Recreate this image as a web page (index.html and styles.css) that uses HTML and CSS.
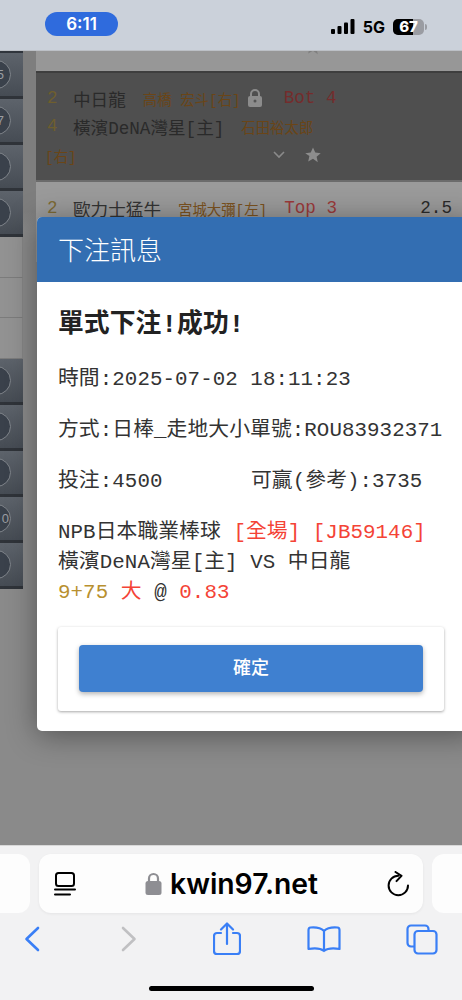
FILE: index.html
```html
<!DOCTYPE html>
<html lang="en">
<head>
  <meta charset="UTF-8">
  <meta name="viewport" content="width=device-width, initial-scale=1.0">
  <title>下注訊息</title>
  <link rel="stylesheet" href="styles.css">
</head>
<body>
  <div class="phone">
    <div class="statusBar">
      <div class="timePill">6:11</div>
      <div class="statusIcons">
        <svg class="signal" width="24" height="16" viewBox="0 0 24 16"><rect x="0" y="10" width="4" height="5" rx="1"/><rect x="6.500" y="7" width="4" height="8" rx="1"/><rect x="13" y="3.500" width="4" height="11.500" rx="1"/><rect x="19.500" y="0" width="4" height="15" rx="1"/></svg>
        <span class="netType">5G</span>
        <div class="battery"><div class="batteryFill"></div><span class="batteryNum">67</span><div class="batteryTip"></div></div>
      </div>
    </div>

    <div class="page">
      <div class="sideCol">
        <div class="sideTop"></div>
        <div class="sideRow"><span class="ball ballFar">5</span></div>
        <div class="sideRow"><span class="ball ballFar">7</span></div>
        <div class="sideRow"><span class="ball"></span></div>
        <div class="sideRow"><span class="ball"></span></div>
        <div class="sideLight"></div>
        <div class="sideLight"></div>
        <div class="sideLight"></div>
        <div class="sideRow"><span class="ball"></span></div>
        <div class="sideRow"><span class="ball"></span></div>
        <div class="sideRow"><span class="ball"></span></div>
        <div class="sideRow"><span class="ball">0</span></div>
        <div class="sideRow"><span class="ball"></span></div>
      </div>
      <div class="gameCol">
        <div class="gameTop">
          <svg class="star topStar" width="18" height="18" viewBox="0 0 24 24"><path d="M12 2l3 6.800 7.300.7-5.500 4.900 1.600 7.200L12 17l-6.400 3.600 1.600-7.200L1.700 9.500 9 8.800z"/></svg>
        </div>
        <div class="gameDark">
          <div class="gameLine">
            <span class="rank">2</span><span class="team">中日龍</span><span class="pitcher p1">高橋 宏斗[右]</span>
            <svg class="lock" width="16" height="20" viewBox="0 0 16 20"><path d="M4 9V6a4 4 0 0 1 8 0v3" fill="none" stroke="#8c8c8c" stroke-width="2"/><rect x="1" y="8" width="14" height="11" rx="2" fill="#8c8c8c"/><circle cx="8" cy="13" r="1.500" fill="#555"/></svg>
            <span class="inning dim">Bot 4</span>
          </div>
          <div class="gameLine">
            <span class="rank">4</span><span class="team">橫濱DeNA灣星[主]</span><span class="pitcher p2">石田裕太郎</span>
          </div>
          <div class="gameLine lastLine">
            <span class="pitcher">[右]</span>
            <svg class="chevron" width="14" height="10" viewBox="0 0 14 10"><path d="M2 2l5 5 5-5" fill="none" stroke="#8a8a8a" stroke-width="1.600"/></svg>
            <svg class="star" width="18" height="18" viewBox="0 0 24 24"><path d="M12 2l3 6.800 7.300.7-5.500 4.900 1.600 7.200L12 17l-6.400 3.600 1.600-7.200L1.700 9.500 9 8.800z"/></svg>
          </div>
        </div>
        <div class="gameLight">
          <div class="gameLine">
            <span class="rank">2</span><span class="team">歐力士猛牛</span><span class="pitcher p3">宮城大彌[左]</span><span class="inning">Top 3</span><span class="odds">2.5</span>
          </div>
        </div>
      </div>

      <div class="modal">
        <div class="modalHead">下注訊息</div>
        <div class="modalBody">
          <h2 class="okTitle">單式下注!成功!</h2>
          <p class="infoLine">時間:2025-07-02 18:11:23</p>
          <p class="infoLine">方式:日棒_走地大小單號:ROU83932371</p>
          <p class="infoLine betLine"><span class="betAmount">投注:4500</span><span>可贏(參考):3735</span></p>
          <div class="betDetail">
            <div>NPB日本職業棒球 <span class="red">[全場] [JB59146]</span></div>
            <div>橫濱DeNA灣星[主] VS 中日龍</div>
            <div><span class="gold">9+75</span> <span class="red">大</span> @ <span class="red">0.83</span></div>
          </div>
          <div class="confirmCard">
            <button class="confirmBtn" type="button">確定</button>
          </div>
        </div>
      </div>
    </div>

    <div class="safari">
      <div class="urlRow">
        <div class="sideTab leftTab"></div>
        <div class="urlBar">
          <svg class="readerIcon" width="22" height="26" viewBox="0 0 22 26" fill="none" stroke="#000" stroke-width="2"><rect x="2" y="2" width="18" height="13" rx="2.500"/><path d="M1 18.500h20M1 23.500h15" stroke-linecap="round"/></svg>
          <div class="urlText">
            <svg width="17" height="23" viewBox="0 0 17 23"><path d="M4 10V6.500a4.500 4.500 0 0 1 9 0V10" fill="none" stroke="#8e8e93" stroke-width="2.200"/><rect x="0.500" y="9" width="16" height="14" rx="2.500" fill="#8e8e93"/></svg>
            <span>kwin97.net</span>
          </div>
          <svg class="reloadIcon" width="22" height="26" viewBox="0 0 22 26" fill="none" stroke="#000" stroke-width="2" stroke-linecap="round" stroke-linejoin="round"><path d="M11.300 4.800A9.700 9.700 0 1 0 21 14.500"/><path d="M8.500 1l6 3.800-5 5.300"/></svg>
        </div>
        <div class="sideTab rightTab"></div>
      </div>
      <div class="toolRow">
        <svg width="16" height="26" viewBox="0 0 16 26" fill="none" stroke="#3a7ff6" stroke-width="2.600" stroke-linecap="round" stroke-linejoin="round"><path d="M14 2L2.500 13 14 24"/></svg>
        <svg width="16" height="26" viewBox="0 0 16 26" fill="none" stroke="#c0c0c2" stroke-width="2.600" stroke-linecap="round" stroke-linejoin="round"><path d="M2 2l11.500 11L2 24"/></svg>
        <svg width="28" height="34" viewBox="0 0 28 34" fill="none" stroke="#3a7ff6" stroke-width="2.200" stroke-linecap="round" stroke-linejoin="round"><path d="M8 11H4a3 3 0 0 0-3 3v15a3 3 0 0 0 3 3h20a3 3 0 0 0 3-3V14a3 3 0 0 0-3-3h-4"/><path d="M14 22V2M8 7.500L14 1.500l6 6"/></svg>
        <svg width="34" height="27" viewBox="0 0 34 27" fill="none" stroke="#3a7ff6" stroke-width="2.200" stroke-linecap="round" stroke-linejoin="round"><path d="M17 5C14 2 9 1 3.500 1.500 2 1.700 1.500 2.500 1.500 4v19c3-.5 11-1.500 15.500 2 4.500-3.500 12.500-2.500 15.500-2V4c0-1.500-.5-2.300-2-2.500C25 1 20 2 17 5zM17 5v20"/></svg>
        <svg width="32" height="31" viewBox="0 0 32 31" fill="none" stroke="#3a7ff6" stroke-width="2.200" stroke-linejoin="round"><path d="M8 22.500H5A3.500 3.500 0 0 1 1.500 19V5A3.500 3.500 0 0 1 5 1.500h14A3.500 3.500 0 0 1 22.500 5v2"/><rect x="8.500" y="7" width="22" height="22.500" rx="3.500"/></svg>
      </div>
      <div class="homeBar"></div>
    </div>
  </div>
</body>
</html>
```

FILE: styles.css
```css
* {
  box-sizing: border-box;
  margin: 0;
  padding: 0;
}

body {
  background-color: #f2f2f3;
  font-family: "Liberation Mono", "Noto Sans CJK TC", monospace;
}

.phone {
  width: 462px;
  height: 1000px;
  overflow: hidden;
  display: flex;
  flex-direction: column;
}

/* Status bar */
.statusBar {
  height: 51px;
  flex: none;
  background-color: #cbd1da;
  border-bottom: 1px solid #bcc0c6;
  display: flex;
  justify-content: space-between;
  padding: 12px 36px 0 45px;
}

.timePill {
  width: 73px;
  height: 24px;
  border-radius: 12px;
  background-color: #2f6bdd;
  color: #fff;
  font-family: Inter, "Liberation Sans", sans-serif;
  font-size: 17px;
  font-weight: 600;
  line-height: 24px;
  text-align: center;
}

.statusIcons {
  display: flex;
  align-items: flex-start;
  padding-top: 7px;
}

.netType {
  margin-left: 8px;
  font-family: Inter, "Liberation Sans", sans-serif;
  font-size: 16px;
  font-weight: 700;
  line-height: 16px;
  color: #000;
}

.battery {
  position: relative;
  width: 31px;
  height: 16px;
  margin: 0 2px 0 8px;
  border-radius: 5px;
  background-color: #9a9ca2;
}

.batteryFill {
  width: 20px;
  height: 16px;
  border-radius: 5px 0 0 5px;
  background-color: #000;
}

.batteryNum {
  position: absolute;
  left: 0;
  top: 0;
  width: 31px;
  text-align: center;
  font-family: Inter, "Liberation Sans", sans-serif;
  font-size: 15px;
  font-weight: 800;
  line-height: 16px;
  color: #fff;
}

.batteryTip {
  position: absolute;
  left: 32px;
  top: 5px;
  width: 2px;
  height: 6px;
  border-radius: 0 2px 2px 0;
  background-color: #9a9ca2;
}

/* Page behind the dialog */
.page {
  position: relative;
  height: 794px;
  flex: none;
  display: flex;
  background-color: #8a8a8a;
}

.sideCol {
  width: 36px;
  flex: none;
  background: linear-gradient(#7e7e7e 160px, #8a8a8a 180px);
  padding-right: 13px;
}

.sideTop {
  height: 2px;
  background-color: #30353c;
}

.sideRow {
  height: 46px;
  display: flex;
  align-items: center;
  overflow: hidden;
  background: linear-gradient(#5d636b, #464c54);
  border-bottom: 3px solid #2f3339;
}

.ball {
  width: 29px;
  height: 29px;
  flex: none;
  margin-left: -18px;
  padding-right: 1px;
  border-radius: 50%;
  background-color: #3a414b;
  border: 1px solid #80858b;
  color: #9a9da2;
  font-family: "Liberation Sans", sans-serif;
  font-size: 13px;
  line-height: 27px;
  text-align: right;
}

.ballFar {
  padding-right: 6px;
}

.sideLight {
  height: 40.670px;
  background-color: #929292;
  border-bottom: 1px solid #7c7c7c;
  border-right: 1px solid #858585;
}

.gameCol {
  flex: 1;
  min-width: 0;
}

.gameTop {
  position: relative;
  height: 20px;
  background-color: #979797;
  overflow: hidden;
}

.gameDark {
  height: 111px;
  padding: 11px 0 0 11px;
  background-color: #4f4f4f;
  border-top: 2px solid #3e3e3e;
  border-bottom: 2px solid #6b6b6b;
}

.gameLight {
  height: 80px;
  padding: 12px 0 0 11px;
  background-color: #9a9a9a;
}

.gameLine {
  display: flex;
  align-items: center;
  height: 28px;
  font-size: 17.600px;
  white-space: nowrap;
}

.lastLine {
  margin-top: 1px;
}

.lastLine .pitcher {
  margin-left: -2px;
}

.rank {
  width: 26px;
  flex: none;
  color: #6e5e2e;
}

.gameLight .rank {
  color: #7d6a35;
}

.team {
  color: #2a2a2a;
}

.gameLight .team {
  color: #333;
}

.pitcher {
  font-size: 14.400px;
  color: #6a4517;
}

.gameLight .pitcher {
  color: #7b5220;
}

.p1 {
  margin-left: 17px;
}

.p2 {
  margin-left: 17px;
}

.p3 {
  margin-left: 17px;
}

.lock {
  margin-left: 6px;
}

.inning {
  margin-left: 17px;
  color: #9b3a3a;
}

.inning.dim {
  margin-left: 21px;
  color: #742c2c;
}

.odds {
  margin-left: auto;
  margin-right: 10px;
  color: #2a2a2a;
}

.chevron {
  margin-left: 195px;
}

.star {
  fill: #8d8d8d;
  margin-left: 18px;
}

.topStar {
  position: absolute;
  left: 250px;
  top: -13px;
  fill: #7f7f7f;
}

/* Dialog */
.modal {
  position: absolute;
  left: 37px;
  top: 166px;
  width: 440px;
  height: 514px;
  border-radius: 5px;
  background-color: #fff;
  box-shadow: 0 4px 30px rgba(0, 0, 0, 0.4);
  overflow: hidden;
}

.modalHead {
  height: 65px;
  padding-left: 21px;
  background-color: #336eb2;
  color: #fff;
  font-family: "Noto Sans CJK TC", sans-serif;
  font-size: 26px;
  font-weight: 300;
  line-height: 63px;
}

.modalBody {
  padding: 29px 0 0 21px;
  color: #333;
  font-size: 20.800px;
  letter-spacing: 0.070px;
  line-height: 30px;
}

.okTitle {
  font-size: 25.800px;
  font-weight: 700;
  line-height: 30px;
  color: #222;
  margin-bottom: 24px;
}

.infoLine {
  margin-bottom: 21px;
  white-space: nowrap;
}

.betLine {
  display: flex;
}

.betAmount {
  width: 193px;
}

.betDetail {
  white-space: nowrap;
}

.red {
  color: #f44336;
}

.gold {
  color: #b8902f;
}

.confirmCard {
  width: 386px;
  height: 84px;
  margin-top: 19px;
  padding: 18px 21px 0;
  border-radius: 3px;
  background-color: #fff;
  box-shadow: 0 1px 3px rgba(0, 0, 0, 0.35);
}

.confirmBtn {
  display: block;
  width: 344px;
  height: 47px;
  padding-bottom: 6px;
  border: none;
  border-radius: 4px;
  background-color: #3f80d0;
  color: #fff;
  font-family: "Noto Sans CJK TC", sans-serif;
  font-size: 18px;
  font-weight: 500;
  box-shadow: 0 2px 5px rgba(0, 0, 0, 0.3);
}

/* Browser toolbar */
.safari {
  flex: 1;
  background-color: #f2f2f3;
  border-top: 1px solid #d8d8d8;
}

.urlRow {
  display: flex;
  height: 59px;
  margin-top: 8px;
}

.sideTab {
  width: 30px;
  flex: none;
  background-color: #fdfdfd;
}

.leftTab {
  border-radius: 0 12px 12px 0;
}

.rightTab {
  border-radius: 12px 0 0 12px;
}

.urlBar {
  width: 384px;
  flex: none;
  margin: 0 9px;
  padding: 0 14px 0 15px;
  border-radius: 12px;
  background-color: #fdfdfd;
  box-shadow: 0 1px 3px rgba(0, 0, 0, 0.06);
  display: flex;
  align-items: center;
  justify-content: space-between;
}

.urlText {
  display: flex;
  align-items: center;
  gap: 8px;
  font-family: Inter, "Liberation Sans", sans-serif;
  font-size: 28.300px;
  font-weight: 600;
  color: #000;
}

.toolRow {
  display: grid;
  grid-template-columns: repeat(5, 97.500px);
  justify-items: center;
  align-items: center;
  height: 34px;
  margin: 9px 0 0 -17px;
}

.homeBar {
  width: 165px;
  height: 5px;
  margin: 30px auto 0;
  border-radius: 3px;
  background-color: #000;
}
```
